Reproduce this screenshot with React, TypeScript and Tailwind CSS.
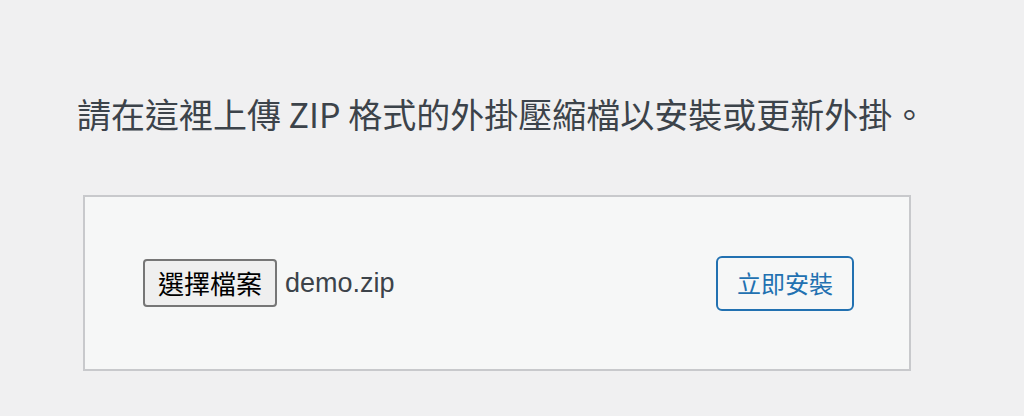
export default function App() {
  return (
    <div className="h-[416px] w-full overflow-hidden bg-[#f0f0f1] font-['Noto_Sans_CJK_TC','Noto_Sans',sans-serif]">
      <p className="pl-[77px] pt-[92px] text-[34px] leading-[43px] text-[#3c434a]">
        請在這裡上傳 ZIP 格式的外掛壓縮檔以安裝或更新外掛。
      </p>

      {/* Upload form */}
      <form
        className="ml-[83px] mt-[60px] flex h-[176px] w-[828px] items-center justify-between border-2 border-[#c8c9cc] bg-[#f6f7f7] pl-[58px] pr-[55px]"
        onSubmit={(e) => e.preventDefault()}
      >
        <div className="flex items-center gap-2">
          <button
            type="button"
            className="flex h-[48px] w-[134px] items-center justify-center rounded-[4px] border-2 border-[#767676] bg-[#efefef] text-[26px] leading-none text-black"
          >
            選擇檔案
          </button>
          <span className="font-['Liberation_Sans','Noto_Sans',sans-serif] text-[27px] text-[#3c434a]">
            demo.zip
          </span>
        </div>
        <button
          type="submit"
          className="flex h-[55px] w-[138px] items-center justify-center rounded-[6px] border-2 border-[#2271b1] bg-[#f6f7f7] text-[24px] leading-none text-[#2271b1]"
        >
          立即安裝
        </button>
      </form>
    </div>
  );
}
